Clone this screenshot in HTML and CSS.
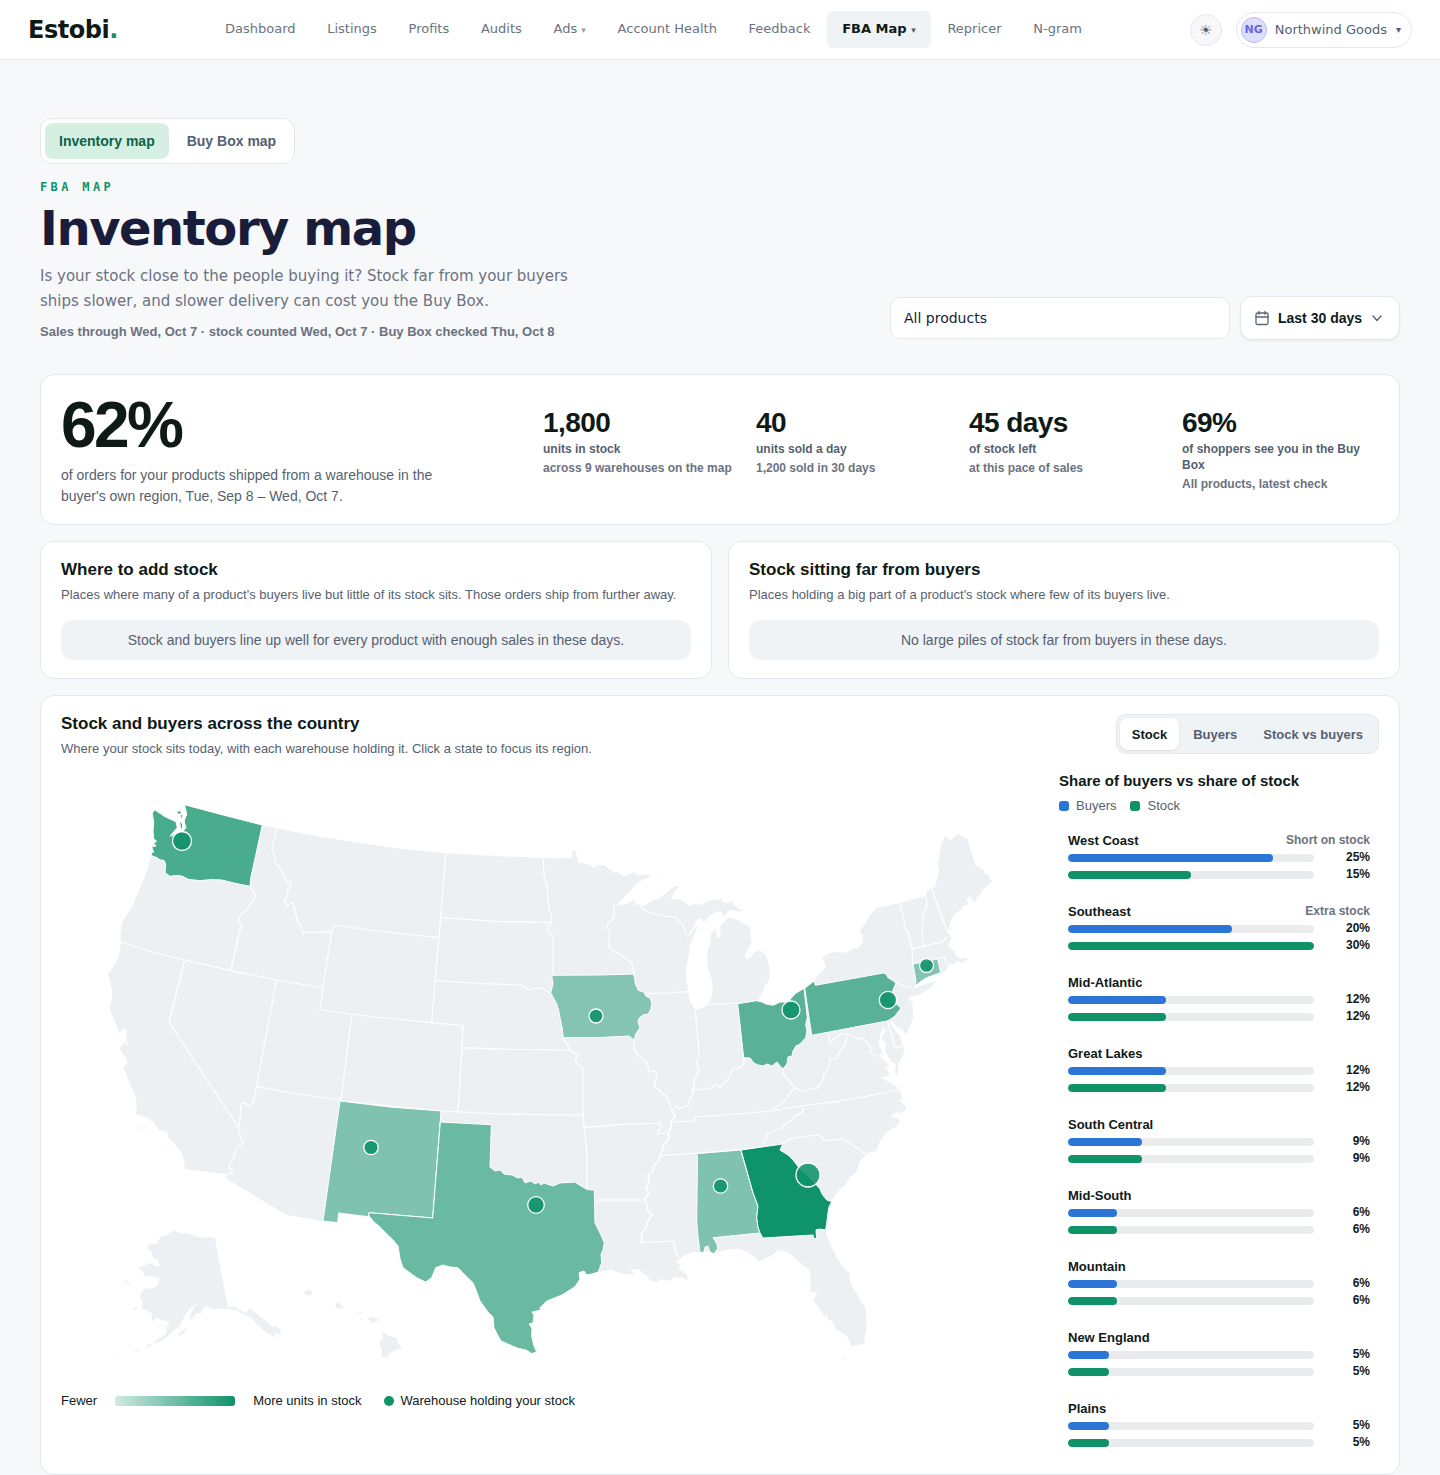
FILE: index.html
```html
<!DOCTYPE html>
<html lang="en">
<head>
<meta charset="utf-8">
<meta name="viewport" content="width=device-width, initial-scale=1">
<title>Inventory map – Estobi</title>
<link rel="stylesheet" href="styles.css">
</head>
<body>
<header class="topbar">
  <a class="logo" href="#">Estobi<span class="logo-dot">.</span></a>
  <nav class="nav" aria-label="Main">
    <a href="#">Dashboard</a>
    <a href="#">Listings</a>
    <a href="#">Profits</a>
    <a href="#">Audits</a>
    <a href="#">Ads <span class="caret">▾</span></a>
    <a href="#">Account Health</a>
    <a href="#">Feedback</a>
    <a class="active" href="#" aria-current="page">FBA Map <span class="caret">▾</span></a>
    <a href="#">Repricer</a>
    <a href="#">N-gram</a>
  </nav>
  <div class="account">
    <button class="theme" type="button" aria-label="Switch theme">☀</button>
    <button class="profile" type="button"><span class="avatar">NG</span><span>Northwind Goods</span><span class="profile-caret">▾</span></button>
  </div>
</header>

<main class="page">
  <nav class="tabs" aria-label="Maps">
    <a class="tab active" href="#" aria-current="page">Inventory map</a>
    <a class="tab" href="#">Buy Box map</a>
  </nav>

  <section class="intro">
    <div class="intro-text">
      <p class="eyebrow">FBA MAP</p>
      <h1>Inventory map</h1>
      <p class="lead">Is your stock close to the people buying it? Stock far from your buyers ships slower, and slower delivery can cost you the Buy Box.</p>
      <p class="freshness">Sales through Wed, Oct 7 · stock counted Wed, Oct 7 · Buy Box checked Thu, Oct 8</p>
    </div>
    <div class="filters">
      <input class="product" type="text" value="All products" aria-label="Product">
      <button class="range" type="button">
        <svg width="16" height="16" viewBox="0 0 16 16" fill="none" stroke="#5b6472" stroke-width="1.3" stroke-linecap="round" stroke-linejoin="round" aria-hidden="true"><rect x="2" y="3" width="12" height="11.5" rx="1.5"/><path d="M2 7h12M5 1.3v3M11 1.3v3"/></svg>
        <span>Last 30 days</span>
        <svg width="14" height="14" viewBox="0 0 14 14" fill="none" stroke="#5b6472" stroke-width="1.4" stroke-linecap="round" stroke-linejoin="round" aria-hidden="true"><path d="M3 5l4 4.5L11 5"/></svg>
      </button>
    </div>
  </section>

  <section class="card summary">
    <div class="headline">
      <p class="big">62%</p>
      <p class="big-note">of orders for your products shipped from a warehouse in the buyer's own region, Tue, Sep 8 – Wed, Oct 7.</p>
    </div>
    <div class="stats">
      <div class="stat"><strong>1,800</strong><span>units in stock</span><small>across 9 warehouses on the map</small></div>
      <div class="stat"><strong>40</strong><span>units sold a day</span><small>1,200 sold in 30 days</small></div>
      <div class="stat"><strong>45 days</strong><span>of stock left</span><small>at this pace of sales</small></div>
      <div class="stat"><strong>69%</strong><span>of shoppers see you in the Buy Box</span><small>All products, latest check</small></div>
    </div>
  </section>

  <div class="pair">
    <section class="card advice">
      <h2>Where to add stock</h2>
      <p class="sub">Places where many of a product's buyers live but little of its stock sits. Those orders ship from further away.</p>
      <p class="empty">Stock and buyers line up well for every product with enough sales in these days.</p>
    </section>
    <section class="card advice">
      <h2>Stock sitting far from buyers</h2>
      <p class="sub">Places holding a big part of a product's stock where few of its buyers live.</p>
      <p class="empty">No large piles of stock far from buyers in these days.</p>
    </section>
  </div>

  <section class="card country">
    <div class="country-head">
      <div>
        <h2>Stock and buyers across the country</h2>
        <p class="sub">Where your stock sits today, with each warehouse holding it. Click a state to focus its region.</p>
      </div>
      <div class="segmented" role="group" aria-label="Map layer">
        <button class="active" type="button" aria-pressed="true">Stock</button>
        <button type="button" aria-pressed="false">Buyers</button>
        <button type="button" aria-pressed="false">Stock vs buyers</button>
      </div>
    </div>
    <div class="country-body">
      <div class="map-side">
        <svg class="map" viewBox="61 771 974 609" role="img" aria-label="Map of stock by state">
          <!-- Lower 48 -->
          <path class="land" d="M262.3 824L276.7 827.3 318 835.5 360 842 402 848 445.7 852.3 500 855.3 543 857 572 857.3 572.3 849 575.7 850 577 857 578.7 861.7 584 862.3 590 864.3 593 866.7 598 864 605 864.3 609 868 612 869 613 871.7 617 870.5 620 873.5 625 875.3 629 873 634 871.3 636 873.5 640 874 646 873.5 652.3 875 642 879 636.7 882.7 628 892 616.7 904 622 904.5 626.7 902.7 635 899 634.7 905.3 638 903 641 905 645 904 655 898.3 660 897.3 668 890 675 885 680 884.7 674 891 670.7 899.3 676 897.5 683.3 900 690 905.7 694 903 700 904 708 900 714 899.3 721 898.3 721.5 896 723 901 728 902 733.3 900 733 904 736.7 905.3 738 908.3 745 908.3 738.3 910.7 731 908.8 726.7 911.7 724 916 721 910 716.7 910.7 712 912.5 708 916.7 704 921 700 917.3 697 918 693.3 926 690 931 687 936 683.3 946 680.7 946 684 939 690 934 694 928 699 923 694 934 690 943 688.5 956 686 966.7 686 978 688.3 990.7 690 1001 694.3 1006.7 698 1008.5 701.7 1007.3 708.3 1003.3 712 995 712.7 986.7 711.5 978 707.7 966.7 707 956 708 946.7 711 942 710.5 936 711.7 931.7 715 929 717 932 716 937 719 937 721 929 720 925 724 921 727.3 916.7 734 917.5 740 920 745 924 750 925 750.5 933 751.7 941.7 748 948 745 953.3 745 957 748.3 958.3 752 955 755 951 760 949.3 766 954 769 964 770 975 768 981 765 984 763 990 758.3 999.3 764 1003 770 1002.7 774 1004.3 780 1002 788.3 999.3 795 993.3 804 987 814 980 820 972 826.7 965 821.7 956.7 830 951.7 838 951 846.7 951.7 853 948 858.3 946.7 863.3 940.7 862 933 859.3 930 865 923.3 870 914 876.7 906.7 900 902 926 895 927.3 888.3 932 887.7 935 886 936.7 880 938 874 939 870 938 862 939 856.7 941 846 945 835 948 837 951.7 839.3 955 835 959.3 833.3 963 836 967.3 837.3 971 850 975.7 865 980 866 981.5 869.5 983.3 868.3 985 873.3 989 874 989 878 992.3 879.3 990 883 983.3 888.3 981 893 977 896 975 901.7 972 899 970 895 966.5 898 968.3 903.3 963 905 961 909 957 911 953.3 915 950 921 949 927 948.3 931.7 951.7 936.7 948.3 945 952 948 955 950 956 955 960 957.5 965 957.5 967.7 955.7 966 960 961.7 961.7 957 960 953.3 964 950 963 948 965 946 970 940.7 971.7 934 974 926.7 976.7 920 981 916 984 913 988 920 985 928 982 936.7 980 931 986 923 991.7 916 995 912.7 995 908 996.7 912.3 1001.7 913.3 1016.7 910 1025 906 1033.3 903 1029.5 898 1026.7 891.7 1020 890 1022 893 1026 896 1031 900 1035 901 1040 904.3 1046.7 903.5 1053 901.7 1056.7 899 1062 898 1070 896.7 1076 895 1070 896 1063 891 1060 888 1055 885 1050 886 1042 881 1037 885 1031 884 1025 881 1032 880 1037 878.3 1041.7 881 1048 883.3 1054 879 1053 882 1058 886 1061 890 1068.3 884 1065 890 1074 880 1077 887 1080 892 1083 898 1086.7 901 1093 902 1099 897 1098 901 1101 906 1105 905.5 1109 900 1112 896 1111 890 1116 898 1117 899.5 1121 896 1126 892 1127.5 886 1132 880 1140 877.5 1146 876.7 1150 870 1151 866.7 1153 859 1161 857.3 1170 850 1176 845 1184 840 1188 835 1195 830.7 1200.7 827 1213 825.7 1230 829 1241 836.7 1256.7 843 1266 850 1273 849.5 1279 853 1287 860 1298 866 1308 866 1319 866.7 1328 865 1333 864.3 1343 857 1344 851 1345.7 850 1340 846.7 1335 841 1331 836 1329 832 1320 828 1318 826 1311 825 1317 821 1310 818 1305 813 1300 817.5 1292 812 1291 810 1290 811 1280 809.3 1268 805 1266 798 1260 791.7 1254 784 1249.5 778 1249.7 773 1254 766 1257 759.3 1260.7 755 1256 748 1251.7 741 1248 735 1247.7 725 1249 717 1251.7 715 1253 707 1250 700 1251 693 1251 686.7 1254 683 1255 678 1260 675 1262 681 1263 678 1269 683 1270 687 1274 688 1280 683 1277 678 1277 675 1275 670 1280 666 1279 661 1278 656.7 1281.7 650 1279 646 1274 641.7 1271.7 639 1268 630 1268 634 1273 628 1273 620 1272 610 1269 598 1271 580 1200 440 1180 323 1220 286.7 1214 225 1177 228 1173.3 185 1168 184 1160 182.7 1155 180 1149 170 1138 168 1136 167 1131 159 1129 153 1120 145 1116 135.7 1113 137 1104 135 1093 130 1083 124 1068 123.5 1066 127 1063 127 1058 123 1053 120 1048 121.5 1041 120 1033 118 1029 116 1023 112 1014 109 1006.7 112 998 112 990 110.5 981 108 973 111 969 116 961.7 120 950 120.7 941 120.5 932 121.7 923 126 915 131.7 906.7 137 894 143 880 147 870 150.7 856 250 870Z"/>
          <path class="land" d="M640 875L645 873.500 650 875.500 643 879ZM658 877l9-6-7 6zM840 1359l5-3 3-1-4 3zM138 1127l3-1 1 1-3 1zM144 1126l4 1-4 .5zM164 1145l2 1-1 1z"/>
          <path class="water" d="M120 1031l4-3 3 1-1 7 2 9-4-4-1 5-3-6z"/>
          <!-- Alaska -->
          <path class="land" d="M175 1229.300L180 1232.700 186 1232 193 1234 199 1236.500 205 1236.700 210 1236 215 1237.700 221 1270 228 1306.700 234 1305 240 1309 246 1312 250 1307 258 1314 266 1320 272 1326 276 1325 281 1329 280 1334 275 1331 277 1336 271.700 1335 265 1327 261 1325 257 1324 252 1317 245 1314 236 1309 226.700 1308 220 1307.500 213 1308.700 207 1305.500 203 1307 201 1312 196 1313 192 1319 189 1316 192 1310 196.700 1302 192 1306 186.700 1311.700 183 1318 180 1325 174 1329 168 1335 162 1340 155 1342.700 156 1339 162 1336 166.700 1331.700 167 1325 170 1321 161.700 1319 156 1317 152 1321 151.700 1312 146 1309 141.700 1308 143 1302 140 1296.700 142 1290 146.700 1287 152 1288 158 1284 159 1276.700 152 1275.500 145 1275 142 1270 138 1266.700 145 1264 153 1261.700 154 1265 160 1265 158 1259 153 1256.700 152 1252 147 1246.700 150 1243 156.700 1242.700 160 1236 166 1234 170 1231.700Z"/>
          <path class="land" d="M145 1346l5-3 2 1-4 2zM134 1350l5-2 1 1-5 2zM124 1354l2-1 0 1zM115 1357l4-2-1 1.500zM178 1333l6-4 3-3-1 4-6 5zM132 1308l4-1 2 1-3 1zM123 1279l3 0 5 4-2 0zM255 1321l8 8 8 5-6-8zM263 1321l9 9 4-1-8-7z"/>
          <!-- Hawaii -->
          <path class="land" d="M303.500 1292L308 1289 312.500 1290 311.500 1294 307 1294.500ZM294 1296l3-2-1 1.500zM335 1304l4-3.500 2 3.500 4 3-8 .500zM354 1311l10 1-3 1zM360 1318l3 0-1 2zM367 1316l3 1 4-1 5 3-7 3.500-2-3zM367 1324l2-.5-1 1zM381.700 1330.700L389 1335 397 1337 398 1342 402 1346.700 394 1350 389 1353 386.700 1357.700 381.700 1355 381.500 1348 379 1342 383 1338Z"/>
          <!-- State borders -->
          <path class="border" d="M120.700 941L152 951 184.700 959 230.700 969.700 276.700 979 322.700 987M250 885L255.700 895 249 905 246 910 242 912 239 917 239.500 921 241.700 924 239 932 230.700 969.700M276.700 827.300L272 847.700 274 853 275 860 280 868 284 876.700 288 881 291 880.700 288 889 287 896 284 900 286.700 905 290 903 292.700 901.700 295 910 297 918 298 922 301 924 303 932.700 306 931 312 932 319 931 326.700 931.700 328 929 331 934M333 924L322.700 987 320 1009 375 1016 431.700 1021.700M333 924L385 931 438 936.700M445.700 852.300L440.700 916.700 435 980 431.700 1021.700 463 1024.700 462 1046.700 458 1111M440.700 916.700L500 920.700 551 921.700M543 857L544 873 547.300 885 548 898 549.300 910 551.500 914 551 921.700 547.300 928 549 932 553.300 935 553 973M435 979.700L480 982.500 520.300 984 529 989 532 987.500 540.700 987 546 990 550.700 992M462 1046.700L515 1048.500 570 1049M351.700 1014L341 1099M341 1100L441 1110 500 1113 540 1113.700 583 1114M563 1037L567 1043 570 1049 574 1052 578 1053 575 1060 579 1065 582.700 1067 583 1114 584.300 1126.700 586.700 1150 586.700 1187.700M184.700 959L169 1021 205 1076 237.700 1125M276.700 979L256.300 1085.700 254 1098 253 1101.700 250 1106 247 1104 244 1101.500 241 1103 240.500 1112 239 1125 238 1127 241 1137 243 1141.700 239 1145 236.700 1148 234 1156 230 1163 229 1167 232 1168 232 1172 228 1173.300M256.300 1085.700L298 1093 340 1099M614.300 904L614.300 906 614 917 608 922 607.300 926.700 610 931 609 940 609.300 946.700 615 951 623 955 626 958 631.700 961.700 634 973M645 992.700L667 992 688 990.700M633 1039L635 1050 640 1056 647.300 1062 649 1071 655.700 1070 657 1075 654 1085 661 1091 668 1097 670 1104 671.700 1108 672 1111M672 1110L676 1105 679 1108 684 1106 688 1105 690 1098 693 1093 692 1090 695 1082 694 1079 699 1070 697 1063 699 1050 695 1008M708 1003.500L737.700 1002M692 1090L696 1088 700 1089 706.700 1086.700 710 1089 716 1083 720 1086 723 1083 728 1078 733 1068 738 1068 744 1063 743.700 1056.700M641 906L648 911 663 915 676.700 916.700 679 921 683 923 686 933.300M783 1067.700L783 1073 789 1080 795 1086.700 803 1090.700 809 1088 817 1087 822 1081.700 824 1073 828 1068 830 1058 836 1058 840 1050 845 1044 847 1035M829 1033L830 1041.700 836 1036 841 1033 847 1033 854 1036 858 1038 862 1037 869 1043 871 1052 879 1056M888 1021.700L895 1047 904 1045M795 1086.700L790 1092 785 1100 778 1105 770 1108M670 1121L695 1120 695 1116 725 1114 770 1110 803 1104.700 836.700 1100.700 868 1095 900 1088.700M803 1104.700L803 1110 798 1114 795 1114 792 1119 786.700 1121.700 782 1127 776 1129 766.700 1133 767 1138 763 1140 762.700 1144M584.300 1126.700L620 1123.700 660 1122 661 1126 657 1132.700 668 1132M660 1154.700L696.700 1152 740.700 1148.700 782.700 1143 788 1139 795 1136.700 818 1134 822 1136 824 1140 843 1137.700 865.700 1153M596.700 1199L646 1199"/>
          <path class="border river" d="M672 1110L675 1116 671 1121 671 1127 668 1132 669 1138 664 1143 663 1148 660 1154 659 1160 654 1164 653 1170 648 1174 649 1181 646 1187 649 1193 645 1198 647 1204 647 1209 652 1213 648 1220 646 1226 642 1232 641 1241.700"/>
          <path class="border" d="M641 1241.700L674 1240 675 1249 678 1256.700M900 902L903 915 906.700 931.700 908 931 912.300 947.700 912.700 963M896 982L910.700 986.700M926 895L927 905 923 913 922.700 922 922 930 923 945M912.300 947.700L941.700 941 948 935M932 887.700L939 909 948 931.700M937.700 958L944 956 946.700 963"/>
          <!-- States holding stock -->
          <path class="state tone-4" d="M154.700 808.700L152.300 812.300 153.700 821.700 153 830 153.700 838 156.700 840.300 153.500 842 156 845 151.500 846 153.700 850.700 150.700 852.700 152.700 855.300 157.300 856.700 160 859 164 859.300 165.700 863.300 165 871.700 170 875.300 176 874.500 181.700 875 188.300 878.300 200 879.700 211 878.500 221.700 879 236 882.500 250 885.300 250.700 877.300 262.300 824 223 814 184.300 803.700 185.700 808.300 186.700 813.300 184 820 186 826.700 183.300 830 176.700 831.700 170 835 177.300 826.700 176 820.700 165 815.700Z"/>
          <path class="water" d="M176 811l5-1 3 1 1 7-2 10 1 5-5-2-9 5 9-11-2-4z"/>
          <path class="tone-4" d="M177 811l3-1 1 2-2 1zM181 814l1 0 0 3-1-1zM180 821l2 2 0 5-1-1z"/>
          <path class="state tone-1" d="M551.700 974.300L600 974 633.300 973 635 978 635 981.700 638.300 989.300 643.300 990.700 646 995 650 997 651.700 1001.700 651 1008 648.300 1013 643 1014 639 1017.300 638 1021 640 1026.700 636 1032.700 635 1036 633.300 1039 629.300 1035 600 1036.500 563.300 1036.700 562 1026 560 1016.700 558.500 1009 556.700 1003 554 998 550.700 991.700 553 983Z"/>
          <path class="state tone-3" d="M737.700 1002.700L756.700 999.700 762 1001 766 1003 773.300 1004.300 780 1001 788 1001 795 992.700 804 987.300 807.300 1016.700 805.700 1024 807 1029 805.700 1036.700 800 1043 796 1045 793 1050 792 1055 788 1056 787 1063 783 1067.700 780 1065 777 1061 772 1065 767 1063 763 1065 758 1064 754 1062 750 1057 743.700 1056.700Z"/>
          <path class="state tone-3" d="M804.700 987.300L814 980 815.300 984.300 850 978 883.300 972 886 973 888 976.700 892 979 896 982 892.700 990 895 1001.700 901 1007 895 1015 891 1018 887 1020 811.700 1034.300Z"/>
          <path class="state tone-1" d="M913 963L937.700 958 940.700 971.700 926.700 976.700 920 981 915 985 916 980Z"/>
          <path class="state tone-1b" d="M340 1100L390 1106 441 1110 432.700 1217 369 1211.700 368 1215.700 338.700 1212 337.700 1221.700 323 1220Z"/>
          <path class="state tone-2" d="M440.300 1121L491.300 1123.700 490 1166 495 1170 500 1169 504 1173 512 1174 518 1177 521.700 1176 525 1181.700 531 1180 535 1183 539 1181 541 1184 544 1182 553 1185 560 1182 568 1181.500 575 1181 581 1185 587.700 1188.700 594.300 1189 595 1222 600 1232 604.300 1241.700 603 1249 601 1253 601.700 1261.700 598.300 1271 592 1273 586.700 1274 584 1270 579 1271.700 580 1278 575 1285.700 562 1294 546.700 1300 540 1306.700 541 1309 532 1311 534 1314 533 1322 529 1323 532 1327 531.700 1335 534 1345 536.700 1350.700 532 1352.700 526 1349 517 1347 508 1343 501 1340 497 1333 494 1326.700 493 1316 488 1311 480 1300 476 1289 473 1281.700 466 1275 458 1266.700 450 1266 443 1264 435.700 1266.700 431.700 1276.700 425.700 1281 417 1277 403 1266.700 400 1258 398 1245 393 1239 386.700 1233 380 1226 374 1221 369 1215 369 1211.700 432.700 1217Z"/>
          <path class="state tone-1b" d="M696.700 1152.700L740.700 1149 753 1191.700 758 1205 756.700 1216.700 758 1226 760 1232 713 1236.700 717 1243 717.500 1248 714 1252.700 710 1251 708 1245 705 1246 704 1251 700 1251.500 698 1236 696.700 1220 697.500 1157Z"/>
          <path class="state tone-5" d="M741 1149L782.700 1143 780 1149 788 1154 793 1159 800 1168 807 1174 813 1180 820 1188 822 1193 826.700 1199 831.700 1200.700 829 1206 828 1211.700 827 1220 825.700 1229 819 1228 816 1229 816.500 1237 814 1238 813 1234 763 1237 760 1232 758 1226 756.700 1216.700 758 1205 753 1191.700Z"/>
          <!-- Warehouses -->
          <g class="warehouses">
            <circle cx="182" cy="840" r="9.500"/>
            <circle cx="596" cy="1015" r="7"/>
            <circle cx="791" cy="1009" r="9"/>
            <circle cx="888" cy="999" r="8.700"/>
            <circle cx="926.500" cy="964.500" r="7"/>
            <circle cx="371" cy="1146.500" r="7.200"/>
            <circle cx="536" cy="1204" r="8.300"/>
            <circle cx="720.500" cy="1185" r="7.200"/>
            <circle cx="808" cy="1174" r="12"/>
          </g>
        </svg>
        <div class="map-legend">
          <span>Fewer</span>
          <span class="ramp"></span>
          <span>More units in stock</span>
          <span class="key"><span class="dot"></span>Warehouse holding your stock</span>
        </div>
      </div>
      <aside class="shares">
        <h3>Share of buyers vs share of stock</h3>
        <div class="share-legend">
          <span class="key"><span class="swatch buyers"></span>Buyers</span>
          <span class="key"><span class="swatch stock"></span>Stock</span>
        </div>
        <ul class="regions">
          <li><div class="region-head"><strong>West Coast</strong><em>Short on stock</em></div><div class="bar"><span class="track"><i class="buyers" style="width:83.3%"></i></span><b>25%</b></div><div class="bar"><span class="track"><i class="stock" style="width:50%"></i></span><b>15%</b></div></li>
          <li><div class="region-head"><strong>Southeast</strong><em>Extra stock</em></div><div class="bar"><span class="track"><i class="buyers" style="width:66.7%"></i></span><b>20%</b></div><div class="bar"><span class="track"><i class="stock" style="width:100%"></i></span><b>30%</b></div></li>
          <li><div class="region-head"><strong>Mid-Atlantic</strong></div><div class="bar"><span class="track"><i class="buyers" style="width:40%"></i></span><b>12%</b></div><div class="bar"><span class="track"><i class="stock" style="width:40%"></i></span><b>12%</b></div></li>
          <li><div class="region-head"><strong>Great Lakes</strong></div><div class="bar"><span class="track"><i class="buyers" style="width:40%"></i></span><b>12%</b></div><div class="bar"><span class="track"><i class="stock" style="width:40%"></i></span><b>12%</b></div></li>
          <li><div class="region-head"><strong>South Central</strong></div><div class="bar"><span class="track"><i class="buyers" style="width:30%"></i></span><b>9%</b></div><div class="bar"><span class="track"><i class="stock" style="width:30%"></i></span><b>9%</b></div></li>
          <li><div class="region-head"><strong>Mid-South</strong></div><div class="bar"><span class="track"><i class="buyers" style="width:20%"></i></span><b>6%</b></div><div class="bar"><span class="track"><i class="stock" style="width:20%"></i></span><b>6%</b></div></li>
          <li><div class="region-head"><strong>Mountain</strong></div><div class="bar"><span class="track"><i class="buyers" style="width:20%"></i></span><b>6%</b></div><div class="bar"><span class="track"><i class="stock" style="width:20%"></i></span><b>6%</b></div></li>
          <li><div class="region-head"><strong>New England</strong></div><div class="bar"><span class="track"><i class="buyers" style="width:16.7%"></i></span><b>5%</b></div><div class="bar"><span class="track"><i class="stock" style="width:16.7%"></i></span><b>5%</b></div></li>
          <li><div class="region-head"><strong>Plains</strong></div><div class="bar"><span class="track"><i class="buyers" style="width:16.7%"></i></span><b>5%</b></div><div class="bar"><span class="track"><i class="stock" style="width:16.7%"></i></span><b>5%</b></div></li>
        </ul>
      </aside>
    </div>
  </section>
</main>
</body>
</html>
```
FILE: styles.css
```css
:root {
  --ink: #0f1a17;
  --navy: #1a1d3a;
  --text: #565f70;
  --muted: #6b7280;
  --line: #e3e8ee;
  --soft: #f0f3f6;
  --green: #0f9268;
  --blue: #2a75d6;
  --display: "DejaVu Sans", sans-serif;
}

* { box-sizing: border-box; }

body {
  margin: 0;
  background: #f7f8fa;
  color: var(--ink);
  font-family: "Liberation Sans", Arial, sans-serif;
  font-size: 14px;
}

h1, h2, h3, p, ul { margin: 0; padding: 0; }
a { color: inherit; text-decoration: none; }
button, input { font: inherit; color: inherit; }

/* Top bar */
.topbar {
  display: flex;
  align-items: center;
  height: 60px;
  padding: 0 28px;
  background: #fff;
  border-bottom: 1px solid var(--line);
  font-family: var(--display);
}
.logo { width: 182px; font-size: 24px; font-weight: 700; letter-spacing: -0.02em; }
.logo-dot { color: var(--green); }
.nav {
  display: flex;
  flex: 1;
  justify-content: space-between;
  max-width: 887px;
  font-size: 13px;
  color: var(--muted);
}
.nav a { padding: 10px 15px; line-height: 16px; border-radius: 6px; white-space: nowrap; }
.nav .active { background: var(--soft); color: var(--ink); font-weight: 700; }
.caret { font-size: 9px; opacity: 0.7; }
.account { display: flex; align-items: center; gap: 14px; margin-left: auto; }
.theme {
  width: 32px;
  height: 32px;
  padding: 0;
  border: 1px solid var(--line);
  border-radius: 50%;
  background: #f7f8fa;
  color: var(--text);
}
.profile {
  display: flex;
  align-items: center;
  gap: 8px;
  height: 36px;
  padding: 0 10px 0 4px;
  border: 1px solid var(--line);
  border-radius: 18px;
  background: #fff;
  color: var(--text);
  font-size: 13px;
  white-space: nowrap;
}
.avatar {
  width: 26px;
  height: 26px;
  border: 1px solid #b9b9f6;
  border-radius: 50%;
  background: #dfdffb;
  color: #6366e8;
  font-size: 11px;
  font-weight: 700;
  line-height: 24px;
}
.profile-caret { margin-left: 1px; font-size: 10px; }

/* Page intro */
.page { padding: 58px 40px 0; }
.tabs {
  display: inline-flex;
  gap: 4px;
  padding: 4px;
  border: 1px solid var(--line);
  border-radius: 12px;
  background: #fff;
}
.tab { padding: 10px 14px; border-radius: 8px; color: var(--text); font-weight: 700; line-height: 16px; }
.tab.active { background: #d5efe3; color: #0b6446; }
.intro { display: flex; align-items: flex-end; justify-content: space-between; gap: 24px; margin-top: 15px; }
.intro-text { max-width: 560px; }
.eyebrow {
  color: var(--green);
  font-family: "DejaVu Sans Mono", monospace;
  font-size: 12px;
  font-weight: 700;
  line-height: 16px;
  letter-spacing: 0.28em;
}
h1 {
  margin-top: 7px;
  color: var(--navy);
  font-family: var(--display);
  font-size: 48px;
  line-height: 52px;
  letter-spacing: -0.03em;
}
.lead { margin-top: 10px; color: var(--muted); font-family: var(--display); font-size: 15px; line-height: 25px; }
.freshness { margin-top: 10px; color: var(--muted); font-size: 13px; font-weight: 700; line-height: 16px; white-space: nowrap; }
.filters { display: flex; align-items: center; gap: 10px; }
.product {
  width: 340px;
  height: 42px;
  padding: 0 13px;
  border: 1px solid var(--line);
  border-radius: 10px;
  background: #fff;
  color: var(--navy);
  font-family: var(--display);
}
.range {
  display: flex;
  align-items: center;
  gap: 8px;
  width: 160px;
  height: 44px;
  padding: 0 13px;
  border: 1px solid var(--line);
  border-radius: 12px;
  background: #fff;
  box-shadow: 0 1px 2px rgba(15, 26, 40, 0.08);
  font-weight: 700;
  white-space: nowrap;
}

/* Cards */
.card { border: 1px solid var(--line); border-radius: 14px; background: #fff; }
h2 { font-size: 17px; line-height: 20px; }
.sub { margin-top: 6px; color: var(--text); font-size: 13px; line-height: 18px; }
.summary {
  display: grid;
  grid-template-columns: 458fr 836fr;
  align-items: center;
  gap: 24px;
  margin-top: 34px;
  padding: 18px 20px 17px;
}
.big { font-size: 64px; font-weight: 700; line-height: 64px; letter-spacing: -0.04em; }
.big-note { max-width: 400px; margin-top: 8px; color: var(--text); line-height: 21px; }
.stats { display: grid; grid-template-columns: repeat(4, 1fr); gap: 16px; }
.stat { display: flex; flex-direction: column; color: var(--text); font-weight: 700; }
.stat strong { color: var(--ink); font-size: 28px; line-height: 30px; letter-spacing: -0.02em; }
.stat span { margin-top: 3px; font-size: 12px; line-height: 16px; }
.stat small { margin-top: 3px; color: var(--muted); font-size: 12px; line-height: 16px; }
.pair { display: grid; grid-template-columns: 1fr 1fr; gap: 16px; margin-top: 16px; }
.advice { padding: 18px 20px; }
.empty {
  margin-top: 16px;
  padding: 12px;
  border-radius: 12px;
  background: var(--soft);
  color: var(--text);
  line-height: 16px;
  text-align: center;
}

/* Map card */
.country { margin-top: 16px; padding: 18px 20px 15px; }
.country-head { display: flex; justify-content: space-between; }
.segmented { display: flex; gap: 2px; height: 40px; padding: 3px; border: 1px solid var(--line); border-radius: 10px; background: var(--soft); }
.segmented button {
  padding: 0 12px;
  border: 0;
  border-radius: 8px;
  background: none;
  color: var(--text);
  font-size: 13px;
  font-weight: 700;
}
.segmented .active { background: #fff; box-shadow: 0 1px 2px rgba(15, 26, 40, 0.1); color: var(--ink); }
.country-body { display: grid; grid-template-columns: minmax(0, 1fr) 320px; gap: 24px; margin-top: 14px; }
.map { display: block; width: 100%; height: auto; }
.land { fill: #edf0f3; }
.water { fill: #fff; }
.border { fill: none; stroke: #fff; stroke-width: 1.2; stroke-linejoin: round; }
.river { stroke-width: 1.6; }
.state { stroke: #fff; stroke-width: 1; stroke-linejoin: round; }
.tone-1 { fill: #86c4b2; }
.tone-1b { fill: #7fc2ad; }
.tone-2 { fill: #6ab9a1; }
.tone-3 { fill: #59b196; }
.tone-4 { fill: #49ac8c; }
.tone-5 { fill: #0f9369; }
.warehouses { fill: var(--green); fill-opacity: 0.88; stroke: #fff; stroke-width: 1.3; }
.map-legend { display: flex; align-items: center; gap: 18px; margin-top: 12px; font-size: 13px; line-height: 16px; }
.ramp { width: 120px; height: 10px; border-radius: 3px; background: linear-gradient(90deg, #d0e9e1, var(--green)); }
.key { display: flex; align-items: center; gap: 7px; }
.dot { width: 10px; height: 10px; border-radius: 50%; background: var(--green); }
.map-legend .key { margin-left: 4px; }

/* Region shares */
.shares h3 { font-size: 15px; line-height: 18px; }
.share-legend { display: flex; gap: 14px; margin-top: 8px; color: var(--text); font-size: 13px; line-height: 16px; }
.swatch { width: 10px; height: 10px; border-radius: 3px; }
.buyers { background: var(--blue); }
.stock { background: var(--green); }
.regions { display: grid; gap: 4px; margin-top: 10px; list-style: none; }
.regions li { padding: 8px 9px; }
.region-head { display: flex; justify-content: space-between; font-size: 13px; line-height: 17px; }
.region-head em { color: var(--muted); font-size: 12px; font-style: normal; font-weight: 700; }
.bar { display: grid; grid-template-columns: 1fr 48px; gap: 8px; align-items: center; font-size: 12px; line-height: 17px; text-align: right; }
.track { height: 8px; border-radius: 4px; background: #eaebed; overflow: hidden; }
.track i { display: block; height: 100%; border-radius: 4px; }
```
